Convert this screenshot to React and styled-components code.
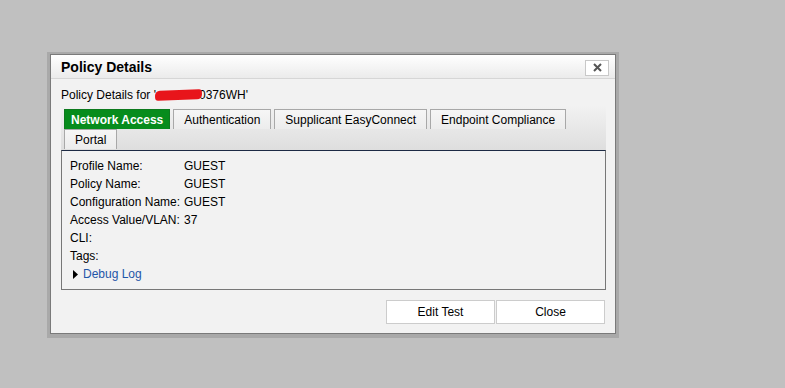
import styled, { createGlobalStyle } from "styled-components";

const GlobalStyle = createGlobalStyle`
	html, body {
		margin: 0;
		padding: 0;
		background: #c0c0c0;
	}
	body {
		font-family: Arial, "Liberation Sans", sans-serif;
		font-size: 12px;
		color: #000;
	}
`;

const Page = styled.div`
	width: 785px;
	height: 388px;
	padding: 54px 0 0 50px;
	box-sizing: border-box;
`;

const Dialog = styled.section`
	width: 566px;
	height: 280px;
	box-sizing: border-box;
	background: #f2f2f2;
	border: 1px solid #7a7a7a;
	box-shadow: 0 1px 0 3px #a9a9a9;
	display: flex;
	flex-direction: column;
`;

const TitleBar = styled.header`
	height: 23px;
	display: flex;
	align-items: center;
	justify-content: space-between;
	padding: 0 6px 0 10px;
	background: linear-gradient(#ffffff, #ebebeb);
	border-bottom: 1px solid #d6d6d6;

	h1 {
		margin: 0;
		font-size: 14px;
		font-weight: 700;
	}
`;

const CloseX = styled.button`
	width: 24px;
	height: 16px;
	padding: 0;
	margin-top: 2px;
	background: #fff;
	border: 1px solid #c8c8c8;
	display: flex;
	align-items: center;
	justify-content: center;
`;

const Body = styled.div`
	padding: 9px 10px 0 10px;
	display: flex;
	flex-direction: column;
`;

const Caption = styled.div`
	height: 14px;
	line-height: 14px;
`;

const Redacted = styled.span`
	display: inline-block;
	width: 47px;
	height: 10px;
	margin: 0 -3px -1px -1px;
	background: #e8151b;
	border-radius: 5px 3px 5px 3px;
	transform: rotate(-2deg);
`;

const TabStrip = styled.div`
	margin-top: 3px;
	padding: 4px 0 1px 3px;
	width: 545px;
	box-sizing: border-box;
	background: linear-gradient(#f2f2f2, #dedede);
	display: flex;
	flex-wrap: wrap;
	column-gap: 2px;
`;

const Tab = styled.div`
	height: 20px;
	line-height: 20px;
	box-sizing: border-box;
	padding: 0 ${(p) => (p.$active ? 6 : 10)}px;
	margin-right: ${(p) => p.$gap || 0}px;
	border: 1px solid ${(p) => (p.$active ? "#0d7a1e" : "#a8a8a8")};
	border-bottom: none;
	background: ${(p) => (p.$active ? "#078c1c" : "linear-gradient(#f6f6f6, #ececec)")};
	color: ${(p) => (p.$active ? "#fff" : "#000")};
	font-weight: ${(p) => (p.$active ? 700 : 400)};
	white-space: nowrap;
`;

const Panel = styled.div`
	width: 545px;
	height: 140px;
	box-sizing: border-box;
	border: 1px solid #777;
	border-top: 1px solid #1d2a44;
	background: #f2f2f2;
	padding: 8px 0 0 8px;
`;

const Row = styled.div`
	display: flex;
	height: 18px;
	line-height: 14px;
`;

const Label = styled.span`
	width: 114px;
`;

const DebugLink = styled.div`
	display: flex;
	align-items: center;
	gap: 5px;
	height: 18px;
	padding-left: 3px;
	margin-top: -2px;
	color: #1f56a8;
`;

const Footer = styled.div`
	display: flex;
	justify-content: flex-end;
	padding-top: 10px;
`;

const Button = styled.button`
	width: 109px;
	height: 24px;
	box-sizing: border-box;
	background: #fff;
	border: 1px solid #cccccc;
	margin-left: ${(p) => p.$gap || 0}px;
	font-family: Arial, "Liberation Sans", sans-serif;
	font-size: 12px;
	color: #000;
	padding: 0;
`;

const fields = [
	["Profile Name:", "GUEST"],
	["Policy Name:", "GUEST"],
	["Configuration Name:", "GUEST"],
	["Access Value/VLAN:", "37"],
	["CLI:", ""],
	["Tags:", ""],
];

const tabs = [
	["Network Access", 1],
	["Authentication", 1],
	["Supplicant EasyConnect", 1],
	["Endpoint Compliance", 0],
	["Portal", 0],
];

export default function App() {
	return (
		<Page>
			<GlobalStyle />
			<Dialog>
				<TitleBar>
					<h1>Policy Details</h1>
					<CloseX aria-label="close">
						<svg width="9" height="9" viewBox="0 0 9 9">
							<path d="M1 1L8 8M8 1L1 8" stroke="#555" strokeWidth="2" />
						</svg>
					</CloseX>
				</TitleBar>
				<Body>
					<Caption>
						Policy Details for '<Redacted />0376WH'
					</Caption>
					<TabStrip>
						{tabs.map(([name, gap], i) => (
							<Tab key={name} $active={i === 0} $gap={gap}>
								{name}
							</Tab>
						))}
					</TabStrip>
					<Panel>
						{fields.map(([k, v]) => (
							<Row key={k}>
								<Label>{k}</Label>
								<span>{v}</span>
							</Row>
						))}
						<DebugLink>
							<svg width="5" height="9" viewBox="0 0 5 9">
								<path d="M0 0L5 4.5L0 9Z" fill="#000" />
							</svg>
							Debug Log
						</DebugLink>
					</Panel>
					<Footer>
						<Button>Edit Test</Button>
						<Button $gap={1}>Close</Button>
					</Footer>
				</Body>
			</Dialog>
		</Page>
	);
}
